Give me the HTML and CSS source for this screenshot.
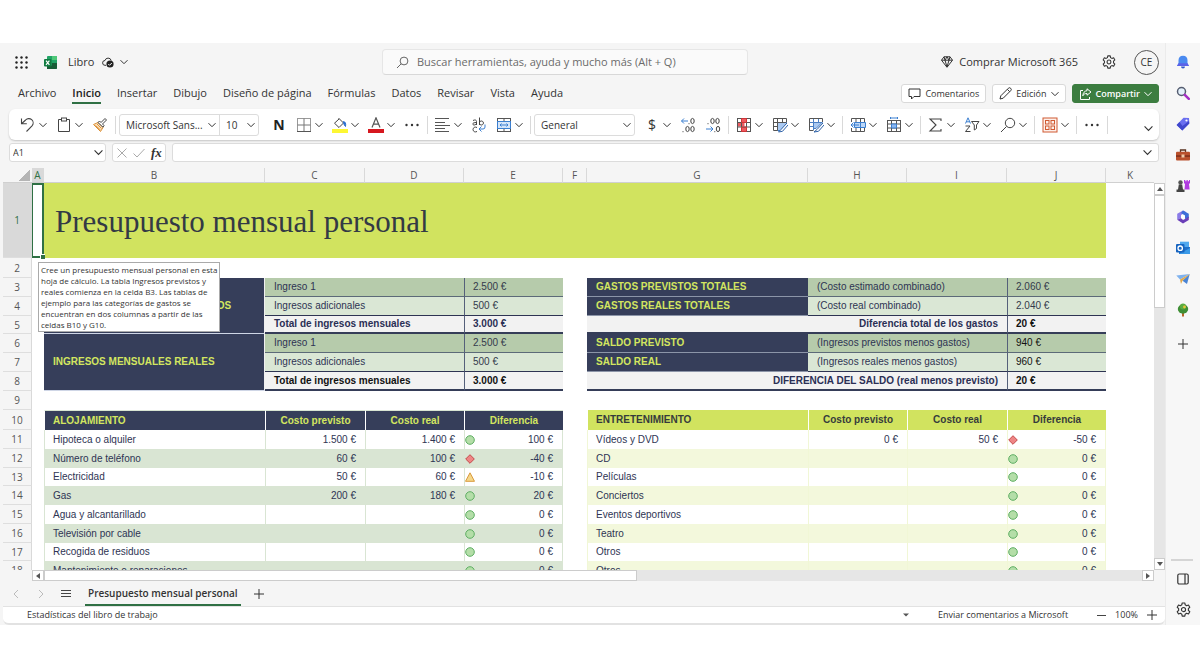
FILE: index.html
```html
<!DOCTYPE html>
<html lang="es">
<head>
<meta charset="utf-8">
<title>Libro - Excel</title>
<link rel="stylesheet" href="styles.css">
</head>
<body>
<svg class="sprite" aria-hidden="true">
  <symbol id="chev" viewBox="0 0 8 8"><path d="M.5 2.200 4 5.700 7.500 2.200" fill="none" stroke="currentColor" stroke-width="1"/></symbol>
  <symbol id="dots" viewBox="0 0 16 16"><g fill="currentColor"><circle cx="2.500" cy="8" r="1.200"/><circle cx="8" cy="8" r="1.200"/><circle cx="13.500" cy="8" r="1.200"/></g></symbol>
  <symbol id="plus" viewBox="0 0 10 10"><path d="M5 0v10M0 5h10" fill="none" stroke="currentColor"/></symbol>
  <symbol id="gear" viewBox="0 0 16 16"><g fill="none" stroke="currentColor" stroke-width="1.200" stroke-linejoin="round"><path d="M6.600 1h2.800l.4 2 1.500.9 2-.7 1.400 2.400-1.500 1.400v2l1.500 1.400-1.400 2.400-2-.7-1.500.9-.4 2H6.600l-.4-2-1.500-.9-2 .7-1.400-2.400L2.800 9V7L1.300 5.600l1.400-2.400 2 .7L6.200 3z"/><circle cx="8" cy="8" r="2.200"/></g></symbol>
  <symbol id="ok" viewBox="0 0 10 10"><circle cx="5" cy="5" r="4.300" fill="#b4dea8" stroke="#5fae63"/></symbol>
  <symbol id="bad" viewBox="0 0 10 10"><path d="M5 .7 9.300 5 5 9.300.7 5z" fill="#ee8585" stroke="#c44a4a"/></symbol>
  <symbol id="warn" viewBox="0 0 10 10"><path d="M5 .8 9.500 9.300H.5z" fill="#f5d78a" stroke="#d99a3c"/></symbol>
</svg>

<div class="window">
<main class="app">
  <header class="titlebar">
    <div class="title-left">
      <button class="icon-btn" aria-label="Iniciador de aplicaciones"><svg width="13" height="13" viewBox="0 0 13 13" fill="#222"><circle cx="1.500" cy="1.500" r="1.200"/><circle cx="6.500" cy="1.500" r="1.200"/><circle cx="11.500" cy="1.500" r="1.200"/><circle cx="1.500" cy="6.500" r="1.200"/><circle cx="6.500" cy="6.500" r="1.200"/><circle cx="11.500" cy="6.500" r="1.200"/><circle cx="1.500" cy="11.500" r="1.200"/><circle cx="6.500" cy="11.500" r="1.200"/><circle cx="11.500" cy="11.500" r="1.200"/></svg></button>
      <svg class="logo" width="13" height="13" viewBox="0 0 13 13"><rect x="3" y="0" width="10" height="13" rx="1" fill="#21a366"/><path d="M8 0h4a1 1 0 0 1 1 1v3H8z" fill="#4fc878"/><path d="M8 7h5v5a1 1 0 0 1-1 1H8z" fill="#185c37"/><rect x="3" y="9.500" width="6" height="3.500" fill="#185c37"/><rect y="3" width="7.500" height="7.500" rx="1" fill="#107c41"/><path d="m2 4.700 3.400 4.200M5.400 4.700 2 8.900" stroke="#fff" stroke-width="1.200"/></svg>
      <span class="doc">Libro</span>
      <button class="doc-btn" aria-label="Estado de guardado"><svg width="12" height="12" viewBox="0 0 12 12"><path d="M4 9.300H3A2.400 2.400 0 0 1 3 4.500a3.200 3.200 0 0 1 6.200 0" fill="none" stroke="#333"/><circle cx="8" cy="8" r="3.600" fill="#222"/><path d="m6.300 8.100 1.200 1.200L9.800 7" fill="none" stroke="#fff"/></svg><svg width="8" height="8"><use href="#chev"/></svg></button>
    </div>
    <label class="search"><svg width="13" height="13" viewBox="0 0 13 13" fill="none" stroke="#666"><circle cx="8" cy="5" r="3.900"/><path d="M5.200 7.800 1 12"/></svg><input type="text" placeholder="Buscar herramientas, ayuda y mucho más (Alt + Q)" aria-label="Buscar"></label>
    <div class="title-right">
      <button class="buy"><svg width="12" height="12" viewBox="0 0 12 12" fill="none" stroke="#333" stroke-linejoin="round"><path d="M3 .8h6l2.500 3.400L6 11.300.5 4.200zM.5 4.200h11M4 4.200 6 11l2-6.800L6 .8 4 4.200M3 .8l1 3.400M9 .8 8 4.200"/></svg>Comprar Microsoft 365</button>
      <button class="icon-btn" aria-label="Configuración"><svg width="14" height="14"><use href="#gear"/></svg></button>
      <button class="avatar">CE</button>
    </div>
  </header>

  <nav class="menubar">
    <a href="#">Archivo</a><a href="#" class="active">Inicio</a><a href="#">Insertar</a><a href="#">Dibujo</a><a href="#">Diseño de página</a><a href="#">Fórmulas</a><a href="#">Datos</a><a href="#">Revisar</a><a href="#">Vista</a><a href="#">Ayuda</a>
    <div class="actions">
      <button class="pill"><svg width="13" height="12" viewBox="0 0 13 12" fill="none" stroke="#333"><path d="M1 1h11v7.500H6L3.500 11V8.500H1z"/></svg>Comentarios</button>
      <button class="pill"><svg width="13" height="13" viewBox="0 0 13 13" fill="none" stroke="#333" stroke-linejoin="round"><path d="m1 12 .8-3.200 7.500-7.500a1.600 1.600 0 0 1 2.400 2.400L4.200 11.200zM8.300 2.300l2.400 2.400"/></svg>Edición<svg width="8" height="8"><use href="#chev"/></svg></button>
      <button class="pill share"><svg width="13" height="12" viewBox="0 0 13 12" fill="none" stroke="#fff" stroke-linejoin="round"><path d="M4 2.500H1.500v9h9V9"/><path d="M8 .8 12 4 8 7.200V5.500C6 5.400 4.800 6 3.800 7.800 4 4.800 5.500 3 8 2.700z"/></svg>Compartir<svg width="8" height="8"><use href="#chev"/></svg></button>
    </div>
  </nav>

  <div class="toolbar" role="toolbar">
    <button class="tool" aria-label="Deshacer"><svg width="16" height="16" viewBox="0 0 16 16" fill="none" stroke="#444" stroke-width="1.100"><path d="M1.500 1.500v5.300h5.300M1.800 6.500 5.600 3A4.300 4.300 0 0 1 12 8.800L6.500 14.500"/></svg><svg width="8" height="8"><use href="#chev"/></svg></button>
    <button class="tool" aria-label="Pegar"><svg width="16" height="16" viewBox="0 0 16 16" fill="none" stroke="#444"><path d="M5.500 2.500h-3v12h11v-12h-3"/><rect x="5.500" y="1" width="5" height="3"/></svg><svg width="8" height="8"><use href="#chev"/></svg></button>
    <button class="tool" aria-label="Copiar formato"><svg width="16" height="16" viewBox="0 0 16 16" stroke-linejoin="round"><path d="M1.500 7.500 6 5.500l5 5L8.500 14.500z" fill="#fbe3c0" stroke="#dd9138"/><path d="m3.500 8.500 5 4.500M5 7l4.500 4.500" stroke="#dd9138" fill="none"/><path d="m6 5.500 1.500-1.500L9 5.500l4-4 1.500 1.500-4 4L12 8.500l-1 1.700z" fill="#fff" stroke="#444"/></svg></button>
    <span class="sep"></span>
    <div class="combo first">
      <label class="field font"><select aria-label="Fuente"><option>Microsoft Sans...</option></select><svg width="8" height="8"><use href="#chev"/></svg></label>
      <label class="field size"><select aria-label="Tamaño"><option>10</option></select><svg width="8" height="8"><use href="#chev"/></svg></label>
    </div>
    <button class="tool bold" aria-label="Negrita">N</button>
    <button class="tool" aria-label="Bordes"><svg width="16" height="16" viewBox="0 0 16 16" fill="none" stroke="#555"><rect x="1.500" y="1.500" width="13" height="13" stroke="#999"/><path d="M8 1.500v13M1.500 8h13" stroke="#777"/><path d="M1 14.500h14"/></svg><svg width="8" height="8"><use href="#chev"/></svg></button>
    <button class="tool" aria-label="Color de relleno"><svg width="16" height="16" viewBox="0 0 16 16"><rect y="12" width="16" height="4" fill="#fdf733"/><path d="M6.500 1 11.500 6 7 10.500 2.500 6.200 7 2" fill="#fff" stroke="#444"/><path d="M11.500 4.500c2 .5 2.500 2 2 5-1-1-1.800-2-2-5" fill="#2b6fd0" stroke="#2b6fd0"/></svg><svg width="8" height="8"><use href="#chev"/></svg></button>
    <button class="tool" aria-label="Color de fuente"><svg width="16" height="16" viewBox="0 0 16 16"><rect y="12" width="16" height="4" fill="#d6171f"/><path d="M4 10.500 8 .8l4 9.700M5.300 7.200h5.400" fill="none" stroke="#555" stroke-width="1.200"/></svg><svg width="8" height="8"><use href="#chev"/></svg></button>
    <button class="tool" aria-label="Más fuente"><svg width="16" height="16"><use href="#dots"/></svg></button>
    <span class="sep"></span>
    <button class="tool" aria-label="Alinear"><svg width="16" height="16" viewBox="0 0 16 16" stroke="#555"><path d="M0 1.500h14M0 5.500h10M0 8.500h15M0 11.500h10M0 14.500h14"/></svg><svg width="8" height="8"><use href="#chev"/></svg></button>
    <button class="tool" aria-label="Ajustar texto"><svg width="16" height="16" viewBox="0 0 16 16" fill="none" stroke="#444"><path d="M2 3.500c2-1 3.500-.5 3.500 1V8M5.500 5.500C3 5.500 1.800 6 1.800 7c0 1.500 3 1.300 3.700-.5M8.500.5V8M8.500 5.500a2 2 0 1 1 0 1M6 10.500c-2-1-4 0-4 2s2 3 4 2"/><path d="M14 7.500v2.500a2 2 0 0 1-2 2H8.500M10.500 9.500 8 12l2.500 2.500" stroke="#3b7fd0"/></svg></button>
    <button class="tool" aria-label="Combinar"><svg width="16" height="16" viewBox="0 0 16 16" fill="none"><rect x="1.500" y="1.500" width="13" height="13" stroke="#555"/><path d="M8 1.500v3M8 11.500v3" stroke="#555"/><rect x="1.500" y="4.500" width="13" height="7" fill="#d5e6fa" stroke="#3b7fd0"/><path d="M4 8h8M5.500 6.500 4 8l1.500 1.500M10.500 6.500 12 8l-1.500 1.500" stroke="#3b7fd0"/></svg><svg width="8" height="8"><use href="#chev"/></svg></button>
    <span class="sep"></span>
    <div class="combo">
      <label class="field number"><select aria-label="Formato de número"><option>General</option></select><svg width="8" height="8"><use href="#chev"/></svg></label>
    </div>
    <button class="tool" aria-label="Moneda"><span class="glyph">$</span><svg width="8" height="8"><use href="#chev"/></svg></button>
    <button class="tool" aria-label="Aumentar decimales"><svg width="16" height="16" viewBox="0 0 16 16" fill="none" stroke="#444"><path d="M8 4H1.500M4 1.500 1.500 4 4 6.500" stroke="#3b7fd0"/><ellipse cx="12.500" cy="4" rx="1.700" ry="2.600"/><path d="M9 6.200v1M3 14.200v1"/><ellipse cx="7.500" cy="12" rx="1.700" ry="2.600"/><ellipse cx="12.500" cy="12" rx="1.700" ry="2.600"/></svg></button>
    <button class="tool" aria-label="Disminuir decimales"><svg width="16" height="16" viewBox="0 0 16 16" fill="none" stroke="#444"><path d="M1 12h7M5.500 9.500 8 12l-2.500 2.500" stroke="#3b7fd0"/><ellipse cx="7.500" cy="4" rx="1.700" ry="2.600"/><ellipse cx="12.500" cy="4" rx="1.700" ry="2.600"/><path d="M3 6.200v1M9.800 14.200v1"/><ellipse cx="13" cy="12" rx="1.700" ry="2.600"/></svg></button>
    <span class="sep"></span>
    <button class="tool" aria-label="Formato condicional"><svg width="16" height="16" viewBox="0 0 16 16" fill="none" stroke="#555"><path d="M5.500 2h5v3.500h-5zM5.500 10h5v4h-5z" fill="#ee5a60" stroke="none"/><path d="M2 6h4v3.500H2zM5.500 6h3v3.500h-3z" fill="#ee5a60" stroke="none"/><rect x="1.500" y="1.500" width="13" height="13"/><path d="M5.500 1.500v13M10.500 1.500v13M1.500 5.500h13M1.500 10h13"/><path d="M5.500 1.500h5v4h-5zM5.500 10h5v4.500h-5z" stroke="#d13438"/></svg><svg width="8" height="8"><use href="#chev"/></svg></button>
    <button class="tool" aria-label="Dar formato como tabla"><svg width="16" height="16" viewBox="0 0 16 16" fill="none" stroke="#555"><path d="M5.500 5.500h9v3l-6 5h-3z" fill="#a9c9f2" stroke="#3b7fd0"/><path d="M14.500 5V1.500h-13v12h4M1.500 5.500h13M1.500 9.500h4M5.500 1.500v12M10.500 1.500v4"/><path d="m15 6-6 6.500-2.500 2.500 4-.7L16 8" fill="#fff" stroke="#2f62a8"/></svg><svg width="8" height="8"><use href="#chev"/></svg></button>
    <button class="tool" aria-label="Estilos de celda"><svg width="16" height="16" viewBox="0 0 16 16" fill="none" stroke="#4a7fc4"><path d="M1.500 1.500h13V5M1.500 1.500v12h4" stroke="#555"/><path d="M2 5.500h12.500M5.500 2v11M10.500 2v3.500M2 9.500h7"/><path d="M5.500 5.500H14l-6 6H5.500z" fill="#a9c9f2"/><path d="m15 6-6 6.500-3 2.500 4.500-.7L16 8" fill="#fff" stroke="#2f62a8"/></svg><svg width="8" height="8"><use href="#chev"/></svg></button>
    <span class="sep"></span>
    <button class="tool" aria-label="Insertar celdas"><svg width="16" height="16" viewBox="0 0 16 16" fill="none" stroke="#555"><path d="M1.500 5V1.500h13V5M1.500 11v3.500h13V11M6 1.500v13M10.500 1.500v13"/><path d="M4.500 5.500h11v5h-11z" fill="#bdd7f7" stroke="#3b7fd0"/><path d="M9 8H1M3.500 5.500 1 8l2.500 2.500M10.500 5.500v5" stroke="#3b7fd0"/></svg><svg width="8" height="8"><use href="#chev"/></svg></button>
    <button class="tool" aria-label="Formato de celdas"><svg width="16" height="16" viewBox="0 0 16 16" fill="none" stroke="#555"><rect x="1.500" y="3.500" width="13" height="11"/><path d="M5.500 3v11.500M10.500 3v11.500M1.500 7h13M1.500 11h13"/><path d="M5.500 7h5v4h-5z" fill="#8db8f0" stroke="#3b7fd0"/><path d="M4.500 1h7M4.500 0v2M11.500 0v2" stroke="#3b7fd0"/></svg><svg width="8" height="8"><use href="#chev"/></svg></button>
    <span class="sep"></span>
    <button class="tool" aria-label="Autosuma"><svg width="16" height="16" viewBox="0 0 16 16" fill="none" stroke="#444" stroke-width="1.100"><path d="M13 4V2H2l6 6-6 6h11v-2"/></svg><svg width="8" height="8"><use href="#chev"/></svg></button>
    <button class="tool" aria-label="Ordenar y filtrar"><svg width="16" height="16" viewBox="0 0 16 16" fill="none" stroke="#444"><path d="M1.500 6.500 4 .8l2.500 5.700M2.300 4.800h3.400" stroke="#3b7fd0"/><path d="M1.500 9h4.500l-4.500 5.500h5M7.500 4.500H15L12.500 8v3.500L10.300 13V8z"/></svg><svg width="8" height="8"><use href="#chev"/></svg></button>
    <button class="tool" aria-label="Buscar y seleccionar"><svg width="16" height="16" viewBox="0 0 16 16" fill="none" stroke="#444"><circle cx="10" cy="6" r="4.700"/><path d="M6.500 9.500 1 15"/></svg><svg width="8" height="8"><use href="#chev"/></svg></button>
    <span class="sep"></span>
    <button class="tool" aria-label="Complementos"><svg width="16" height="16" viewBox="0 0 16 16" fill="none" stroke="#d05a32"><rect x="1" y="1" width="14" height="14" fill="#fdf0eb"/><rect x="3.500" y="3.500" width="3.500" height="3.500"/><rect x="9" y="3.500" width="3.500" height="3.500"/><rect x="3.500" y="9" width="3.500" height="3.500"/><rect x="9" y="9" width="3.500" height="3.500"/></svg><svg width="8" height="8"><use href="#chev"/></svg></button>
    <span class="sep"></span>
    <button class="tool" aria-label="Más opciones"><svg width="16" height="16"><use href="#dots"/></svg></button>
    <span class="sep"></span>
    <button class="tool collapse" aria-label="Opciones de la cinta"><svg width="9" height="9"><use href="#chev"/></svg></button>
  </div>

  <div class="formulabar">
    <label class="namebox"><input type="text" value="A1" aria-label="Cuadro de nombres"><svg width="9" height="9"><use href="#chev"/></svg></label>
    <div class="fx">
      <button aria-label="Cancelar"><svg width="10" height="10" viewBox="0 0 10 10" stroke="#aaa"><path d="m.5.5 9 9M9.500.5l-9 9"/></svg></button>
      <button aria-label="Introducir"><svg width="12" height="10" viewBox="0 0 12 10" stroke="#aaa" fill="none"><path d="m.5 5.500 3.500 3.500L11.500 1"/></svg></button>
      <button class="fn">fx</button>
    </div>
    <label class="formula"><input type="text" aria-label="Barra de fórmulas"><svg width="9" height="9"><use href="#chev"/></svg></label>
  </div>

  <div class="sheet">
    <div class="grid">
      <table>
        <colgroup><col class="w-head"><col class="w-a"><col class="w-wide"><col class="w-100"><col class="w-99"><col class="w-99"><col class="w-f"><col class="w-wide"><col class="w-99"><col class="w-100"><col class="w-99"><col></colgroup>
        <thead><tr><th class="corner"></th><th class="sel">A</th><th>B</th><th>C</th><th>D</th><th>E</th><th>F</th><th>G</th><th>H</th><th>I</th><th>J</th><th>K</th></tr></thead>
        <tbody>
        <tr class="r-title"><th class="sel">1</th><td class="cursor"></td><td class="banner" colspan="9">Presupuesto mensual personal</td><td></td></tr>
        <tr class="r20"><th>2</th><td colspan="11"></td></tr>
        <tr><th>3</th><td></td><td class="navy last" rowspan="3">INGRESOS MENSUALES PREVISTOS</td><td class="g1" colspan="2">Ingreso 1</td><td class="g1 val">2.500 €</td><td></td><td class="navy">GASTOS PREVISTOS TOTALES</td><td class="g1" colspan="2">(Costo estimado combinado)</td><td class="g1 val">2.060 €</td><td></td></tr>
        <tr><th>4</th><td></td><td class="g2 dark" colspan="2">Ingresos adicionales</td><td class="g2 val dark">500 €</td><td></td><td class="navy">GASTOS REALES TOTALES</td><td class="g2 dark" colspan="2">(Costo real combinado)</td><td class="g2 val dark">2.040 €</td><td></td></tr>
        <tr class="r18"><th>5</th><td></td><td class="tot" colspan="2">Total de ingresos mensuales</td><td class="tot val">3.000 €</td><td></td><td class="tot right" colspan="3">Diferencia total de los gastos</td><td class="tot val black">20 €</td><td></td></tr>
        <tr><th>6</th><td></td><td class="navy last" rowspan="3">INGRESOS MENSUALES REALES</td><td class="g1" colspan="2">Ingreso 1</td><td class="g1 val">2.500 €</td><td></td><td class="navy">SALDO PREVISTO</td><td class="g1" colspan="2">(Ingresos previstos menos gastos)</td><td class="g1 val semi">940 €</td><td></td></tr>
        <tr><th>7</th><td></td><td class="g2 dark" colspan="2">Ingresos adicionales</td><td class="g2 val dark">500 €</td><td></td><td class="navy">SALDO REAL</td><td class="g2 dark" colspan="2">(Ingresos reales menos gastos)</td><td class="g2 val dark semi">960 €</td><td></td></tr>
        <tr><th>8</th><td></td><td class="tot black" colspan="2">Total de ingresos mensuales</td><td class="tot val black">3.000 €</td><td></td><td class="tot right" colspan="3">DIFERENCIA DEL SALDO (real menos previsto)</td><td class="tot val black">20 €</td><td></td></tr>
        <tr><th>9</th><td colspan="11"></td></tr>
        <tr class="r20"><th>10</th><td></td><td class="hd1 left">ALOJAMIENTO</td><td class="hd1">Costo previsto</td><td class="hd1">Costo real</td><td class="hd1">Diferencia</td><td></td><td class="hd2 left">ENTRETENIMIENTO</td><td class="hd2">Costo previsto</td><td class="hd2">Costo real</td><td class="hd2">Diferencia</td><td></td></tr>
        <tr><th>11</th><td></td><td class="c1">Hipoteca o alquiler</td><td class="c1 num">1.500 €</td><td class="c1 num">1.400 €</td><td class="c1 flag"><div><svg width="10" height="10"><use href="#ok"/></svg>100 €</div></td><td></td><td class="c2">Vídeos y DVD</td><td class="c2 num">0 €</td><td class="c2 num">50 €</td><td class="c2 flag"><div><svg width="10" height="10"><use href="#bad"/></svg>-50 €</div></td><td></td></tr>
        <tr class="band"><th>12</th><td></td><td class="c1">Número de teléfono</td><td class="c1 num">60 €</td><td class="c1 num">100 €</td><td class="c1 flag"><div><svg width="10" height="10"><use href="#bad"/></svg>-40 €</div></td><td></td><td class="c2">CD</td><td class="c2"></td><td class="c2"></td><td class="c2 flag"><div><svg width="10" height="10"><use href="#ok"/></svg>0 €</div></td><td></td></tr>
        <tr class="r18"><th>13</th><td></td><td class="c1">Electricidad</td><td class="c1 num">50 €</td><td class="c1 num">60 €</td><td class="c1 flag"><div><svg width="10" height="10"><use href="#warn"/></svg>-10 €</div></td><td></td><td class="c2">Películas</td><td class="c2"></td><td class="c2"></td><td class="c2 flag"><div><svg width="10" height="10"><use href="#ok"/></svg>0 €</div></td><td></td></tr>
        <tr class="band"><th>14</th><td></td><td class="c1">Gas</td><td class="c1 num">200 €</td><td class="c1 num">180 €</td><td class="c1 flag"><div><svg width="10" height="10"><use href="#ok"/></svg>20 €</div></td><td></td><td class="c2">Conciertos</td><td class="c2"></td><td class="c2"></td><td class="c2 flag"><div><svg width="10" height="10"><use href="#ok"/></svg>0 €</div></td><td></td></tr>
        <tr><th>15</th><td></td><td class="c1">Agua y alcantarillado</td><td class="c1"></td><td class="c1"></td><td class="c1 flag"><div><svg width="10" height="10"><use href="#ok"/></svg>0 €</div></td><td></td><td class="c2">Eventos deportivos</td><td class="c2"></td><td class="c2"></td><td class="c2 flag"><div><svg width="10" height="10"><use href="#ok"/></svg>0 €</div></td><td></td></tr>
        <tr class="band"><th>16</th><td></td><td class="c1">Televisión por cable</td><td class="c1"></td><td class="c1"></td><td class="c1 flag"><div><svg width="10" height="10"><use href="#ok"/></svg>0 €</div></td><td></td><td class="c2">Teatro</td><td class="c2"></td><td class="c2"></td><td class="c2 flag"><div><svg width="10" height="10"><use href="#ok"/></svg>0 €</div></td><td></td></tr>
        <tr class="r18"><th>17</th><td></td><td class="c1">Recogida de residuos</td><td class="c1"></td><td class="c1"></td><td class="c1 flag"><div><svg width="10" height="10"><use href="#ok"/></svg>0 €</div></td><td></td><td class="c2">Otros</td><td class="c2"></td><td class="c2"></td><td class="c2 flag"><div><svg width="10" height="10"><use href="#ok"/></svg>0 €</div></td><td></td></tr>
        <tr class="band"><th>18</th><td></td><td class="c1">Mantenimiento o reparaciones</td><td class="c1"></td><td class="c1"></td><td class="c1 flag"><div><svg width="10" height="10"><use href="#ok"/></svg>0 €</div></td><td></td><td class="c2">Otros</td><td class="c2"></td><td class="c2"></td><td class="c2 flag"><div><svg width="10" height="10"><use href="#ok"/></svg>0 €</div></td><td></td></tr>
        </tbody>
      </table>
      <div class="note" role="tooltip">Cree un presupuesto mensual personal en esta<br>hoja de cálculo. La tabla Ingresos previstos y<br>reales comienza en la celda B3. Las tablas de<br>ejemplo para las categorías de gastos se<br>encuentran en dos columnas a partir de las<br>celdas B10 y G10.</div>
    </div>
    <div class="vscroll"><button class="arrow" aria-label="Arriba"><svg width="6" height="4" viewBox="0 0 6 4"><path d="M3 0 6 4H0z" fill="#555"/></svg></button><div class="track"><div class="thumb"></div></div><button class="arrow" aria-label="Abajo"><svg width="6" height="4" viewBox="0 0 6 4"><path d="M3 4 6 0H0z" fill="#555"/></svg></button></div>
  </div>
  <div class="hscroll"><button class="arrow" aria-label="Izquierda"><svg width="4" height="6" viewBox="0 0 4 6"><path d="M0 3 4 0v6z" fill="#555"/></svg></button><div class="track"><div class="thumb"></div></div><button class="arrow" aria-label="Derecha"><svg width="4" height="6" viewBox="0 0 4 6"><path d="M4 3 0 0v6z" fill="#555"/></svg></button></div>

  <div class="sheets">
    <button class="nav" aria-label="Anterior"><svg width="6" height="10" viewBox="0 0 6 10" fill="none" stroke="#bbb"><path d="M5 1 1 5l4 4"/></svg></button>
    <button class="nav" aria-label="Siguiente"><svg width="6" height="10" viewBox="0 0 6 10" fill="none" stroke="#bbb"><path d="m1 1 4 4-4 4"/></svg></button>
    <button class="nav" aria-label="Todas las hojas"><svg width="10" height="9" viewBox="0 0 10 9" stroke="#444"><path d="M0 1.500h10M0 4.500h10M0 7.500h10"/></svg></button>
    <button class="sheet-tab">Presupuesto mensual personal</button>
    <button class="nav" aria-label="Nueva hoja"><svg width="10" height="10"><use href="#plus"/></svg></button>
  </div>

  <footer class="status">
    <span>Estadísticas del libro de trabajo</span>
    <span class="grow"></span>
    <svg width="6" height="4" viewBox="0 0 6 4"><path d="M0 .5h6l-3 3z" fill="#555"/></svg>
    <a href="#">Enviar comentarios a Microsoft</a>
    <div class="zoom"><button aria-label="Alejar"><svg width="9" height="9" viewBox="0 0 9 9" stroke="#444"><path d="M0 4.500h9"/></svg></button><span>100%</span><button aria-label="Acercar"><svg width="10" height="10"><use href="#plus"/></svg></button></div>
  </footer>
</main>

<aside class="sidebar">
  <button aria-label="Notificaciones"><svg width="14" height="14" viewBox="0 0 14 14"><path d="M7 .7c3 0 4.500 2 4.500 4.500v3L13 11H1l1.500-2.800v-3C2.500 2.700 4 .7 7 .7z" fill="#4a8af0"/><path d="M2.500 8.200h9L13 11H1z" fill="#5b62e8"/><path d="M5 11.500h4a2 2 0 0 1-4 0z" fill="#3158c9"/></svg></button>
  <button aria-label="Buscar"><svg width="14" height="14" viewBox="0 0 14 14"><circle cx="5.500" cy="5.500" r="4" fill="#e3f0fb" stroke="#555d70" stroke-width="1.500"/><path d="m8.800 8.800 4 4" stroke="#a32fc4" stroke-width="2.500" stroke-linecap="round"/></svg></button>
  <button aria-label="Compras"><svg width="14" height="14" viewBox="0 0 14 14"><path d="M7.500.8 13 1l.3 5.500-7 7L.6 8z" fill="#6a6ff0"/><path d="M3.500 5 .6 8l5.700 5.500 7-7L13 4l-6.500 5z" fill="#4047cc"/><circle cx="10.500" cy="3.500" r="1.100" fill="#fff"/></svg></button>
  <button aria-label="Herramientas"><svg width="14" height="14" viewBox="0 0 14 14"><path d="M4.500 4V2h5v2" fill="none" stroke="#5a3321" stroke-width="1.300"/><rect y="3.700" width="14" height="8.800" rx="1" fill="#b9502c"/><path d="M0 7.300h14v1.500H0z" fill="#7d2f1c"/><rect x="5.500" y="6.500" width="3" height="3" fill="#f0c9a8"/></svg></button>
  <button aria-label="Juegos"><svg width="14" height="14" viewBox="0 0 14 14"><path d="M8 1h1.300v1.200h1.200V1h1.300v1.200H13V1h1v3l-1 1 .7 5.500H8.500L9 5 8 4z" fill="#b03be0"/><circle cx="4.500" cy="3.500" r="2.200" fill="#555"/><path d="M2.800 5.500h3.400l.8 5H2zM.5 10.500h8V13h-8z" fill="#444"/></svg></button>
  <button aria-label="Microsoft 365"><svg width="14" height="14" viewBox="0 0 14 14"><path d="M7 .5 1.200 3.800v6L5 8V5l5-3z" fill="#8b7ce8"/><path d="m7 .5 5.800 3.300V8L9 9V5.500L5 3z" fill="#3d6fd8"/><path d="M1.200 9.800 7 13.500l5.800-3.500V6.500L9 9l-2 1-2-2z" fill="#6b3fb8"/><circle cx="7" cy="7" r="2" fill="#fff"/></svg></button>
  <button aria-label="Outlook"><svg width="14" height="14" viewBox="0 0 14 14"><rect x="4" y=".7" width="9" height="8" fill="#50a8ee"/><path d="M3 6h11v7H3z" fill="#1f6fc8"/><path d="m3 13 11-6v6z" fill="#3a9ae8"/><rect y="3" width="8.500" height="8.500" rx="1" fill="#1664c0"/><circle cx="4.200" cy="7.200" r="2.200" fill="none" stroke="#fff" stroke-width="1.300"/></svg></button>
  <button aria-label="Drop"><svg width="14" height="14" viewBox="0 0 14 14"><path d="M.3 3.500 13.700 2 4 7.500z" fill="#7fb2ee"/><path d="M13.700 2 11 12 6.500 8.800z" fill="#4a84d4"/><path d="M13.700 2 4 7.500 5 12l1.500-3.200z" fill="#e2a84a"/></svg></button>
  <button aria-label="Árbol"><svg width="14" height="14" viewBox="0 0 14 14"><path d="M6 8h2v5.500H6z" fill="#b8672a"/><ellipse cx="7" cy="6" rx="5.200" ry="4.700" fill="#3f8f35"/><circle cx="7" cy="3.500" r="3" fill="#5aac40"/><circle cx="8.500" cy="4" r="1.400" fill="#e8c23a"/></svg></button>
  <button class="add" aria-label="Añadir"><svg width="10" height="10"><use href="#plus"/></svg></button>
  <span class="rule"></span>
  <button aria-label="Panel"><svg width="12" height="12" viewBox="0 0 12 12" fill="none" stroke="#333" stroke-width="1.200"><rect x=".8" y="1" width="10.400" height="10" rx="1.500"/><path d="M8 1v10"/></svg></button>
  <button aria-label="Ajustes"><svg width="15" height="15"><use href="#gear"/></svg></button>
</aside>
</div>
</body>
</html>
```
FILE: styles.css
```css
* { box-sizing: border-box; }
body { margin: 0; padding: 43px 0; background: #fff; color: #333; font: 11px/16px "Open Sans", "Noto Sans", sans-serif; }
button, input, select { font: inherit; color: inherit; margin: 0; padding: 0; border: 0; background: none; }
button { display: flex; align-items: center; justify-content: center; }
a { color: inherit; text-decoration: none; }
svg { display: block; flex: none; }
.sprite { position: absolute; width: 0; height: 0; }

.window { display: flex; height: calc(100vh - 86px); min-height: 400px; background: #f5f5f5; }
.app { flex: 1; min-width: 0; margin-left: 3px; display: flex; flex-direction: column; border-right: 1px solid #ebebeb; }

/* Title bar */
.titlebar { display: grid; grid-template-columns: 379fr 366fr 417fr; align-items: center; height: 38px; flex: none; }
.title-left { display: flex; align-items: center; padding-left: 12px; }
.logo { margin-left: 16px; }
.doc { margin: 0 8px 0 11px; }
.doc-btn { gap: 6px; }
.search { display: flex; align-items: center; gap: 8px; height: 26px; padding: 0 13px; background: #fafafa; border: 1px solid #e6e6e6; border-bottom-color: #d8d8d8; border-radius: 4px; }
.search input { flex: 1; min-width: 0; outline: 0; }
.search input::placeholder { color: #6b6b6b; opacity: 1; }
.title-right { display: flex; align-items: center; justify-content: flex-end; padding-right: 6px; }
.buy { gap: 6px; margin-right: 24px; }
.avatar { width: 25px; height: 25px; margin-left: 18px; border: 1px solid #555; border-radius: 50%; font-size: 10px; }

/* Menu */
.menubar { display: flex; align-items: flex-start; gap: 16px; height: 26px; padding: 4px 6px 0 15px; flex: none; white-space: nowrap; }
.menubar a { padding-bottom: 1px; }
.menubar .active { font-weight: 600; color: #222; border-bottom: 2px solid #2f7044; }
.actions { display: flex; gap: 6px; margin: -1px 0 0 auto; }
.pill { height: 19px; padding: 0 6px; gap: 4px; background: #fff; border: 1px solid #d9d9d9; border-radius: 3px; font-size: 9px; }
.share { background: #3c7d40; border-color: #3c7d40; color: #fff; font-weight: 600; }

/* Toolbar */
.toolbar { display: flex; align-items: center; gap: 9px; height: 31px; margin: 2px 6px 3px; padding: 0 6px 0 11px; background: #fff; border-radius: 6px; box-shadow: 0 1px 2px #0003; flex: none; }
.tool { gap: 3px; height: 24px; flex: none; }
.sep { width: 1px; height: 18px; margin: 0 -2px; background: #d9d9d9; flex: none; }
.combo { display: flex; height: 22px; margin-left: -4px; border: 1px solid #dcdcdc; border-radius: 3px; flex: none; }
.combo.first { margin-right: 3px; }
.field { position: relative; display: flex; }
.field select { appearance: none; width: 100%; padding: 0 14px 0 6px; font-size: 10px; line-height: 20px; }
.field svg { position: absolute; right: 3px; top: 6px; pointer-events: none; }
.font { width: 99px; }
.size { width: 39px; border-left: 1px solid #dcdcdc; }
.number { width: 99px; }
.bold { width: 16px; font-size: 14px; font-weight: 700; color: #222; }
.glyph { width: 16px; font-size: 14px; text-align: center; }
.collapse { margin: 8px 0 0 auto; }

/* Formula bar */
.formulabar { display: flex; gap: 6px; height: 19px; margin: 0 6px 6px; flex: none; }
.formulabar > * { display: flex; align-items: center; background: #fff; border: 1px solid #dcdcdc; border-radius: 3px; }
.formulabar input { flex: 1; min-width: 0; outline: 0; }
.namebox { width: 97px; padding: 0 2px 0 3px; font-size: 9px; }
.fx { width: 54px; gap: 6px; padding: 0 4px; }
.fn { font: italic 700 13px/16px "Liberation Serif", serif; }
.formula { flex: 1; padding: 0 6px; }

/* Grid */
.sheet { display: flex; flex: 1; min-height: 0; }
.grid { position: relative; flex: 1; min-width: 0; overflow: hidden; }
table { width: 100%; table-layout: fixed; border-collapse: separate; border-spacing: 0; background: #fff; font: 10px/14px "Liberation Sans", Arial, sans-serif; color: #2e3453; }
.w-head { width: 29px; }
.w-a { width: 12px; }
.w-wide { width: 221px; }
.w-100 { width: 100px; }
.w-99 { width: 99px; }
.w-f { width: 24px; }
th { padding: 0; background: #f5f5f5; color: #555; font: 10px/14px "Open Sans", sans-serif; border-right: 1px solid #d9d9d9; }
thead th { border-bottom: 1px solid #d0d0d0; }
thead th:last-child { border-right: 0; }
tbody th { border-bottom: 1px solid #dedede; }
th.sel { background: #d9d9d9; color: #2f7044; }
th.corner { background: linear-gradient(135deg, #f5f5f5 50%, #b5b5b5 50%) no-repeat 16px 2px / 11px 11px #f5f5f5; border-right: 0; }
td { padding: 0 9px; white-space: nowrap; overflow: hidden; }
thead tr { height: 15px; }
tbody tr { height: 19px; }
tbody .r18 { height: 18px; }
tbody .r20 { height: 20px; }
tbody .r-title { height: 75px; }
td.cursor { position: relative; overflow: visible; border: 2px solid #2f7044; border-left-width: 1px; }
.cursor::after { content: ""; position: absolute; right: -3px; bottom: -3px; width: 4px; height: 4px; background: #2f7044; border: 1px solid #fff; border-width: 1px 0 0 1px; }
.banner { padding: 2px 11px 0; background: #d1e35f; color: #333a45; font: 31px/40px "Liberation Serif", "Times New Roman", serif; }
.navy { background: #363e5a; color: #d3e660; font-weight: 700; border-bottom: 1px solid #8c95a8; }
.navy.last { border-bottom-color: #cfd6e6; border-right: 1px solid #f0f0f0; }
.g1 { background: #b6cbab; border-bottom: 1px solid #5c6a78; }
.g2 { background: #dae7d5; }
.dark { border-bottom: 1px solid #2e3453; }
.val { border-left: 1px solid #55607a; padding-left: 8px; color: #343a4c; }
.semi { color: #111; }
.tot { background: #f2f2f2; border-bottom: 2px solid #353d58; font-weight: 700; color: #2a2f55; }
.tot.black { color: #111; }
.right { text-align: right; }
.hd1, .hd2 { text-align: center; font-weight: 700; border-left: 1px solid #fff; }
.hd1 { background: #363e5a; color: #d3e660; border-top: 1px solid #d9e5d3; }
.hd2 { background: #d1e35f; color: #363c3c; }
.left { text-align: left; padding-left: 8px; }
.c1, .c2 { padding-left: 8px; border-left: 1px solid #d9e5d3; }
.c2 { border-left-color: #f1f7d6; }
.band .c1 { background: #d9e5d3; }
.band .c2 { background: #f3f8dc; }
.num { text-align: right; }
.flag { padding: 0 9px 0 0; }
.flag div { display: flex; align-items: center; justify-content: space-between; }
.c1.flag { border-right: 1px solid #d9e5d3; }
.c2.flag { border-right: 1px solid #f1f7d6; }
.note { position: absolute; left: 35px; top: 94px; padding: 1px 2px; background: #fff; border: 1px solid #aaa; font-size: 8px; line-height: 11px; white-space: nowrap; color: #333; }

/* Scroll bars */
.vscroll { display: flex; flex-direction: column; width: 11px; padding-top: 15px; flex: none; }
.hscroll { display: flex; height: 11px; margin: 0 11px 0 29px; flex: none; }
.arrow { width: 11px; height: 12px; background: #fff; border: 1px solid #ccc; flex: none; }
.hscroll .arrow { width: 12px; height: 11px; }
.track { flex: 1; background: #e6e6e6; }
.thumb { background: #fff; border: 1px solid #ccc; }
.vscroll .thumb { height: 31%; }
.hscroll .thumb { width: 54%; height: 11px; }

/* Sheet tabs and status bar */
.sheets { display: flex; align-items: center; height: 25px; flex: none; }
.nav { width: 25px; }
.sheet-tab { height: 25px; margin: 0 6px 0 7px; padding: 0 3px; font-size: 10px; font-weight: 600; border-bottom: 2px solid #2f7044; }
.status { display: flex; align-items: center; height: 19px; padding: 0 8px 0 24px; background: #fff; border: 1px solid #e2e2e2; border-width: 1px 0 2px; border-radius: 0 0 6px 6px; font-size: 9px; flex: none; }
.grow { flex: 1; }
.status a { margin: 0 29px; }
.zoom { display: flex; align-items: center; gap: 9px; }

/* Browser side bar */
.sidebar { display: flex; flex-direction: column; width: 34px; padding-top: 3px; background: #f7f7f7; flex: none; }
.sidebar button { height: 31px; flex: none; }
.sidebar .add { height: 37px; }
.rule { height: 2px; margin: auto 7px 2px 5px; background: #d5d5d5; }
```
